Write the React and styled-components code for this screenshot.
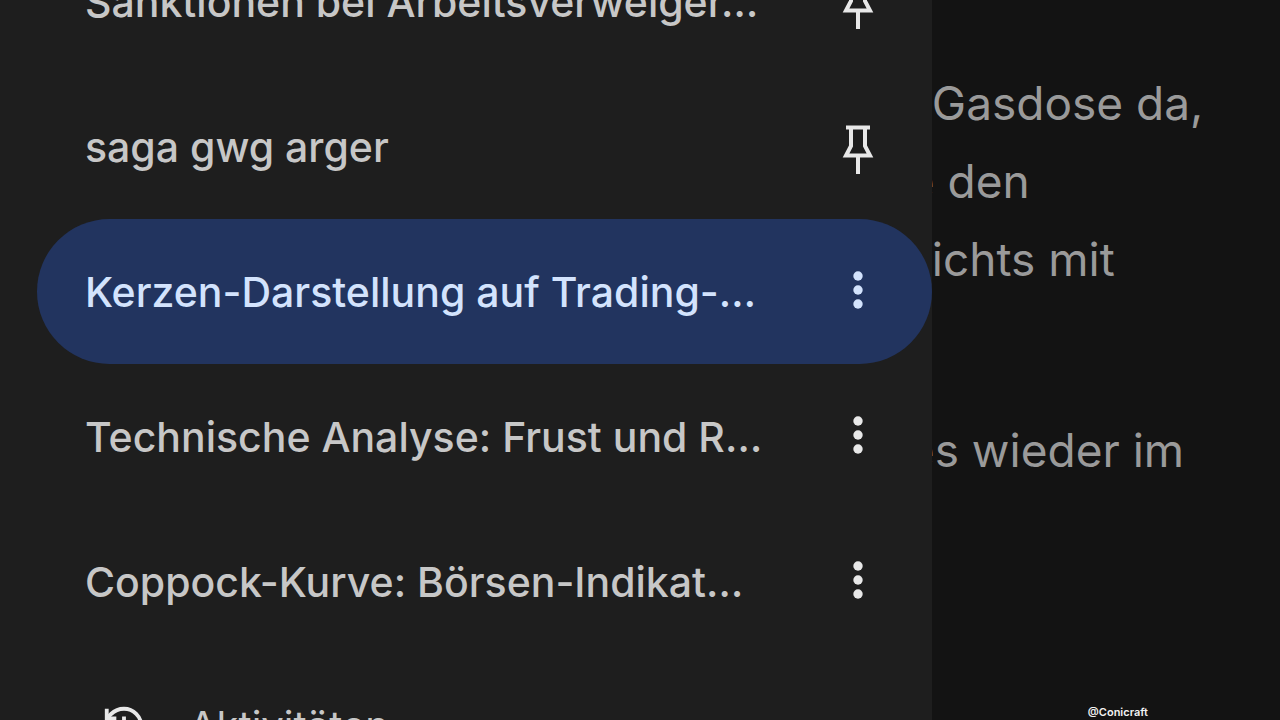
import React from "react";
import styled, { createGlobalStyle } from "styled-components";

const GlobalStyle = createGlobalStyle`
  * { box-sizing: border-box; }
  body { margin: 0; background: #131313; }
`;

const Screen = styled.div`
  display: flex;
  height: 100vh;
  overflow: hidden;
  background: #131313;
  font-family: Inter, Roboto, sans-serif;
`;

const Drawer = styled.aside`
  position: relative;
  z-index: 1;
  flex: none;
  width: 72.8%;
  padding-left: 37px;
  background: #1e1e1e;
`;

const ChatList = styled.ul`
  list-style: none;
  margin: -71px 0 0;
  padding: 0;
`;

const ChatRow = styled.li`
  display: flex;
  align-items: center;
  height: 145px;
  padding: 0 48px;
  border-radius: 73px;
  color: ${(p) => (p.$active ? "#d3e3fd" : "#c7c7c7")};
  background: ${(p) => (p.$active ? "#22345f" : "transparent")};
`;

const ChatLink = styled.a`
  flex: 1;
  min-width: 0;
  white-space: nowrap;
  color: inherit;
  text-decoration: none;
  font-size: 41px;
  line-height: 56px;
  font-weight: 500;
`;

const IconButton = styled.button`
  display: flex;
  align-items: center;
  justify-content: center;
  flex: none;
  width: 52px;
  height: 64px;
  padding: 0;
  border: 0;
  background: none;
  color: ${(p) => (p.$active ? "#d3e3fd" : "#e8e8e8")};
`;

const ActivityLink = styled.a`
  display: flex;
  align-items: center;
  gap: 42px;
  height: 143px;
  padding-left: 64px;
  color: #c7c7c7;
  text-decoration: none;
  font-size: 40px;
  line-height: 56px;
  font-weight: 400;
`;

const Conversation = styled.main`
  flex: 1;
  min-width: 0;
  display: flex;
  flex-direction: column;
  margin-left: -24px;
  padding-top: 64px;
  color: #9a9a9a;
  font-size: 46px;
  line-height: 78px;
`;

const Paragraph = styled.p`
  margin: 0 0 35px;
  min-height: ${(p) => p.$lines * 78}px;
`;

const Line = styled.span`
  display: block;
  white-space: nowrap;
  padding-left: ${(p) => p.$lead}px;
`;

const Watermark = styled.footer`
  margin-top: auto;
  padding-left: 48px;
  height: 14px;
  text-align: center;
  color: #f2f2f2;
  font-size: 11px;
  line-height: 12px;
  font-weight: 600;
`;

function PinIcon() {
  return (
    <svg width="32" height="56" viewBox="0 -6 32 56" fill="none" stroke="currentColor" strokeWidth="4" aria-hidden="true">
      <path d="M4 2.5H28M9 2.5V21L4 30.5H28L23 21V2.5" />
      <path d="M16 30.5V49" />
    </svg>
  );
}

function MoreIcon() {
  return (
    <svg width="12" height="42" viewBox="0 0 12 42" fill="currentColor" aria-hidden="true">
      <circle cx="6" cy="5" r="4.7" />
      <circle cx="6" cy="19" r="4.7" />
      <circle cx="6" cy="33" r="4.7" />
    </svg>
  );
}

function HistoryIcon() {
  return (
    <svg width="46" height="46" viewBox="0 0 24 24" fill="none" stroke="#e8e8e8" strokeWidth="2" aria-hidden="true">
      <path d="M3 12a9 9 0 1 0 9-9 9.75 9.75 0 0 0-6.74 2.74L3 8" />
      <path d="M3 3v5h5" />
      <path d="M12 7v5l4 2" />
    </svg>
  );
}

const chats = [
  { title: "Sanktionen bei Arbeitsverweiger…", pinned: true },
  { title: "saga gwg arger", pinned: true },
  { title: "Kerzen-Darstellung auf Trading-…", active: true },
  { title: "Technische Analyse: Frust und R…" },
  { title: "Coppock-Kurve: Börsen-Indikat…" },
];

export default function App() {
  return (
    <>
      <GlobalStyle />
      <Screen>
        <Drawer>
          <ChatList>
            {chats.map((chat) => (
              <ChatRow key={chat.title} $active={chat.active}>
                <ChatLink href="#">{chat.title}</ChatLink>
                <IconButton $active={chat.active} aria-label={chat.pinned ? "Angepinnt" : "Mehr"}>
                  {chat.pinned ? <PinIcon /> : <MoreIcon />}
                </IconButton>
              </ChatRow>
            ))}
          </ChatList>
          <ActivityLink href="#">
            <HistoryIcon />
            Aktivitäten
          </ActivityLink>
        </Drawer>
        <Conversation>
          <Paragraph $lines={4}>
            <Line $lead={24}>Gasdose da,</Line>
            <Line $lead={0}>e den</Line>
            <Line $lead={24}>ichts mit</Line>
          </Paragraph>
          <Paragraph $lines={1}>
            <Line $lead={0}>es wieder im</Line>
          </Paragraph>
          <Watermark>@Conicraft</Watermark>
        </Conversation>
      </Screen>
    </>
  );
}
